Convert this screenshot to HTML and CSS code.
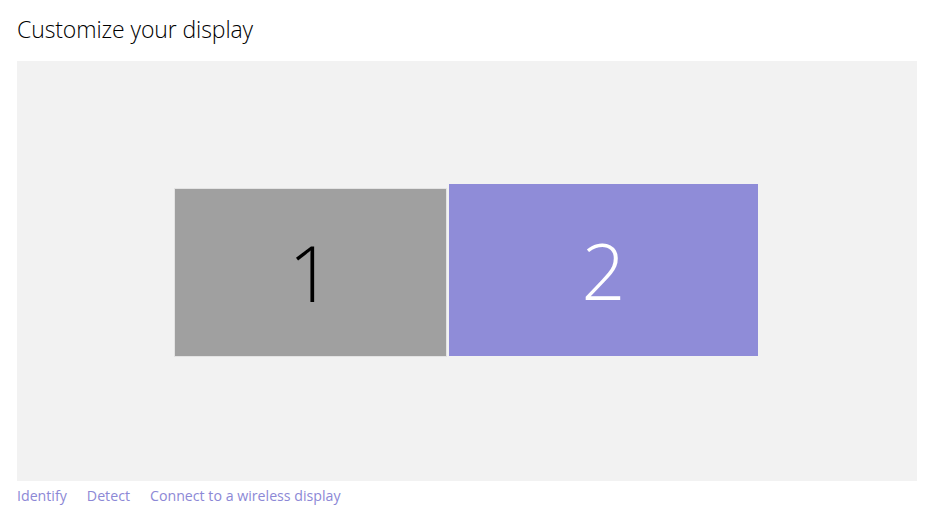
FILE: index.html
```html
<!DOCTYPE html>
<html>
<head>
<meta charset="utf-8">
<link rel="stylesheet" href="styles.css">
</head>
<body>
<div class="page">
  <h1 class="title">Customize your display</h1>
  <div class="canvas">
    <div class="monitors">
      <div class="monitor monitor-main"><span class="num">1</span></div>
      <div class="monitor monitor-selected"><span class="num">2</span></div>
    </div>
  </div>
  <div class="links">
    <a class="link">Identify</a>
    <a class="link">Detect</a>
    <a class="link">Connect to a wireless display</a>
  </div>
</div>
</body>
</html>
```
FILE: styles.css
```css
html, body {
  margin: 0;
  padding: 0;
  background: #ffffff;
}
body {
  font-family: "Open Sans", "Noto Sans", sans-serif;
}
.page {
  padding: 0 14px 0 17px;
}
.title {
  margin: 0;
  padding-top: 14px;
  height: 61px;
  box-sizing: border-box;
  font-size: 23px;
  font-weight: 300;
  line-height: 30px;
  color: #000;
  letter-spacing: -0.1px;
}
.canvas {
  width: 900px;
  height: 420px;
  background: #f2f2f2;
  box-sizing: border-box;
  padding-top: 123px;
  padding-left: 157px;
}
.monitors {
  display: flex;
  align-items: flex-start;
  gap: 2px;
}
.monitor {
  display: flex;
  align-items: center;
  justify-content: center;
  box-sizing: border-box;
}
.monitor-main {
  margin-top: 4px;
  width: 273px;
  height: 169px;
  background: #a0a0a0;
  border: 1px solid #e3e3e3;
  color: #000;
}
.monitor-selected {
  width: 309px;
  height: 172px;
  background: #8f8cd8;
  color: #fff;
}
.num {
  font-size: 77px;
  font-weight: 300;
  line-height: 1;
}
.links {
  display: flex;
  gap: 20px;
  padding-top: 5px;
  font-size: 14.2px;
  line-height: 20px;
}
.link {
  color: #8c88d6;
  text-decoration: none;
}
```
